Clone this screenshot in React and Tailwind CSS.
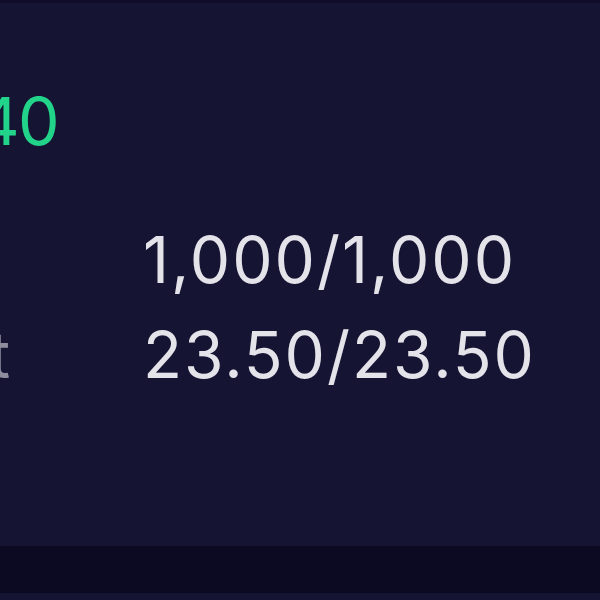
export default function App() {
  const rows = [
    { label: 'Size', value: '1,000/1,000' },
    { label: 'Amount', value: '23.50/23.50' },
  ];

  return (
    <div className="w-[600px] h-[600px] overflow-hidden bg-[#161433] font-['Inter',sans-serif] flex flex-col">
      <div className="h-[3px] bg-[#0f0d2a]" />
      <div className="h-[543px] overflow-hidden">
        <div className="-ml-[260px] pt-[78px]">
          <div className="text-[66px] leading-[80px] text-[#22d38a] w-[318px] text-right tracking-tight">
            $1,240
          </div>
          <div className="mt-[59px] flex flex-col gap-[15px]">
            {rows.map((row) => (
              <div key={row.label} className="flex items-baseline">
                <div className="w-[403px] shrink-0 text-[64px] leading-[80px] text-[#8e8d9e]">
                  <span className="inline-block pl-[35px]">{row.label}</span>
                </div>
                <div className="text-[64px] leading-[80px] tracking-[2px] text-[#e4e3ea]">{row.value}</div>
              </div>
            ))}
          </div>
        </div>
      </div>
      <div className="h-[47px] bg-[#0c0a22]" />
      <div className="flex-1 bg-[#161433]" />
    </div>
  );
}
